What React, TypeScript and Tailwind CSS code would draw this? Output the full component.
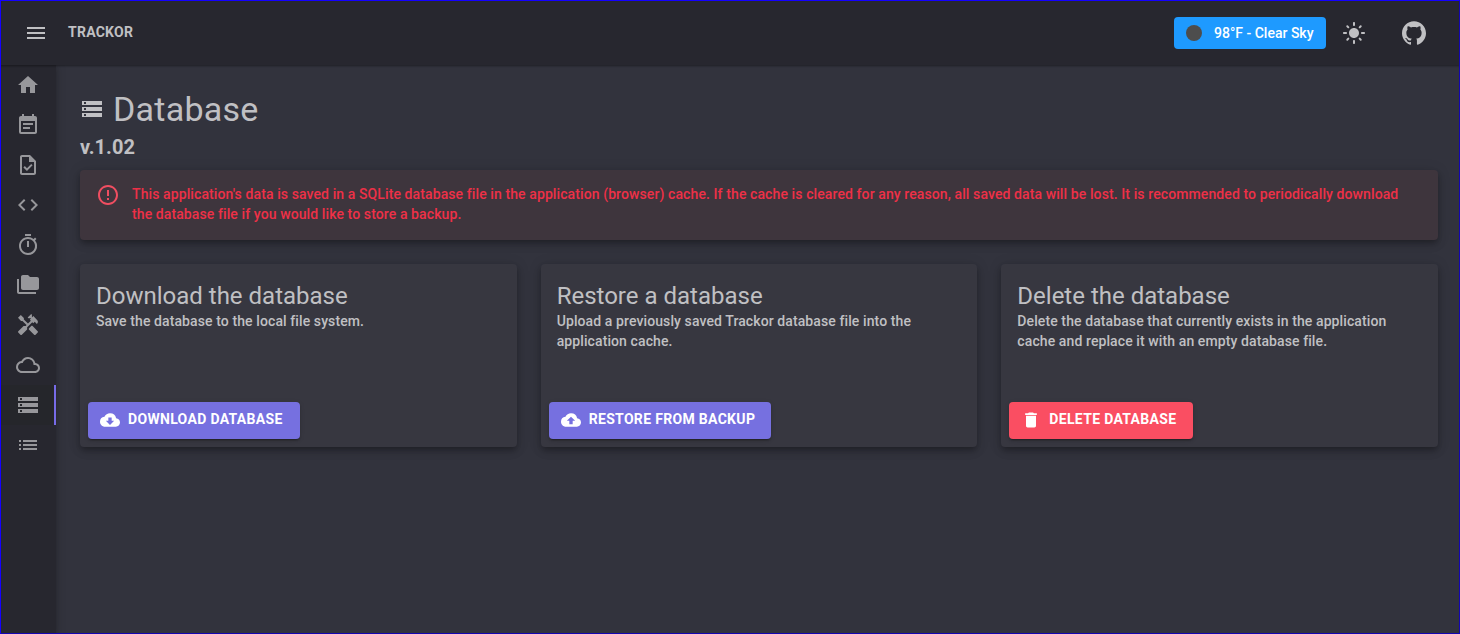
import type { ReactNode } from "react";
import type { IconType } from "react-icons";
import {
  MdMenu, MdHome, MdEventNote, MdOutlineTask, MdCode, MdOutlineTimer, MdFolderCopy,
  MdHandyman, MdCloudQueue, MdStorage, MdList, MdLightMode, MdErrorOutline, MdCloudDownload,
  MdCloudUpload, MdDelete,
} from "react-icons/md";
import { SiGithub } from "react-icons/si";

const navItems: { label: string; icon: IconType }[] = [
  { label: "Home", icon: MdHome },
  { label: "Planner", icon: MdEventNote },
  { label: "Tasks", icon: MdOutlineTask },
  { label: "Snippets", icon: MdCode },
  { label: "Timer", icon: MdOutlineTimer },
  { label: "Projects", icon: MdFolderCopy },
  { label: "Tools", icon: MdHandyman },
  { label: "Weather", icon: MdCloudQueue },
  { label: "Database", icon: MdStorage },
  { label: "Log", icon: MdList },
];

const elevation =
  "shadow-[0_3px_5px_-1px_rgba(0,0,0,0.2),0_5px_8px_0_rgba(0,0,0,0.14),0_1px_14px_0_rgba(0,0,0,0.12)]";

function ActionCard({ title, text, color, icon: Icon, action, width }: {
  title: string; text: ReactNode; color: string; icon: IconType; action: string; width: string;
}) {
  return (
    <section className={`flex h-[183px] flex-col justify-between rounded bg-[#373740] ${elevation}`}>
      <div className="px-4 pt-4">
        <h2 className="pt-px text-2xl leading-[30px]">{title}</h2>
        <p className="text-sm font-medium leading-5 tracking-[0.1px]">{text}</p>
      </div>
      <div className="flex p-2">
        <button
          className={`flex h-[37px] items-center gap-2 whitespace-nowrap rounded pb-px pl-3 text-sm font-bold uppercase tracking-[0.32px] text-white shadow-[0_3px_1px_-2px_rgba(0,0,0,0.2),0_2px_2px_0_rgba(0,0,0,0.14),0_1px_5px_0_rgba(0,0,0,0.12)] ${width} ${color}`}
        >
          <Icon className="size-5" />
          <span className="-mt-0.5">{action}</span>
        </button>
      </div>
    </section>
  );
}

export default function App() {
  return (
    <div className="relative flex h-[634px] w-[1460px] flex-col overflow-hidden bg-[#32333d] font-['Roboto',sans-serif] text-[#c0c0c3]">
      <header className="z-20 flex h-[65px] w-full shrink-0 items-center bg-[#27272f] pl-6 pr-[34px] pt-px shadow-[0_1px_2px_0_rgba(0,0,0,0.4)]">
        <MdMenu className="size-6" />
        <span className="ml-5 -mt-0.5 text-sm font-bold uppercase tracking-[0.25px]">Trackor</span>
        <div className="ml-auto flex h-8 w-[152px] items-center whitespace-nowrap rounded bg-[#1e9aff] px-3 text-sm font-medium text-white">
          <span className="size-4 rounded-full bg-[#4d4d4d]" />
          <span className="ml-3">98°F - Clear Sky</span>
        </div>
        <MdLightMode className="ml-4 size-6" />
        <SiGithub className="ml-9 size-6" />
      </header>
      <div className="flex min-h-0 flex-1">
        <nav className="z-10 w-14 shrink-0 bg-[#27272f] text-[#97979b] shadow-[0_2px_4px_-1px_rgba(0,0,0,0.2),0_1px_10px_0_rgba(0,0,0,0.2)]">
          {navItems.map(({ label, icon: Icon }) => (
            <a
              key={label}
              aria-label={label}
              className={`flex h-10 items-center pl-4 ${label === "Database" ? "border-r-2 border-[#776be7] bg-[#25262b]" : ""}`}
            >
              <Icon className="size-6" />
            </a>
          ))}
        </nav>
        <main className="flex-1 pl-6 pr-[22px] pt-[23px]">
          <h1 className="flex h-[42px] items-center text-[34px] leading-[42px] tracking-[0.25px]">
            <MdStorage className="mr-[9px] size-6" />
            Database
          </h1>
          <h2 className="mt-px text-xl font-bold leading-8 tracking-[0.05px]">v.1.02</h2>
          <div className={`mt-[7px] flex h-[70px] rounded bg-[#3e353d] px-4 pt-[14px] ${elevation}`}>
            <MdErrorOutline className="-mt-px size-6 shrink-0 text-[#f04e61]" />
            <p className="ml-3 whitespace-nowrap text-sm font-medium leading-5 tracking-[0.1px] text-[#ee3047]">
              This application's data is saved in a SQLite database file in the application (browser) cache. If the
              cache is cleared for any reason, all saved data will be lost. It is recommended to periodically download
              <br />
              the database file if you would like to store a backup.
            </p>
          </div>
          <div className="mt-6 grid grid-cols-3 gap-6">
            <ActionCard
              title="Download the database"
              text="Save the database to the local file system."
              color="bg-[#7670e0]"
              icon={MdCloudDownload}
              action="Download database"
              width="w-[212px]"
            />
            <ActionCard
              title="Restore a database"
              text={<>Upload a previously saved Trackor database file into the<br />application cache.</>}
              color="bg-[#7670e0]"
              icon={MdCloudUpload}
              action="Restore from backup"
              width="w-[222px]"
            />
            <ActionCard
              title="Delete the database"
              text={<>Delete the database that currently exists in the application<br />cache and replace it with an empty database file.</>}
              color="bg-[#fa4e62]"
              icon={MdDelete}
              action="Delete database"
              width="w-[184px]"
            />
          </div>
        </main>
      </div>
      <div className="pointer-events-none absolute inset-0 z-30 border border-[#1400ff] border-b-[#1406b0] border-r-[#1406b0]" />
    </div>
  );
}
